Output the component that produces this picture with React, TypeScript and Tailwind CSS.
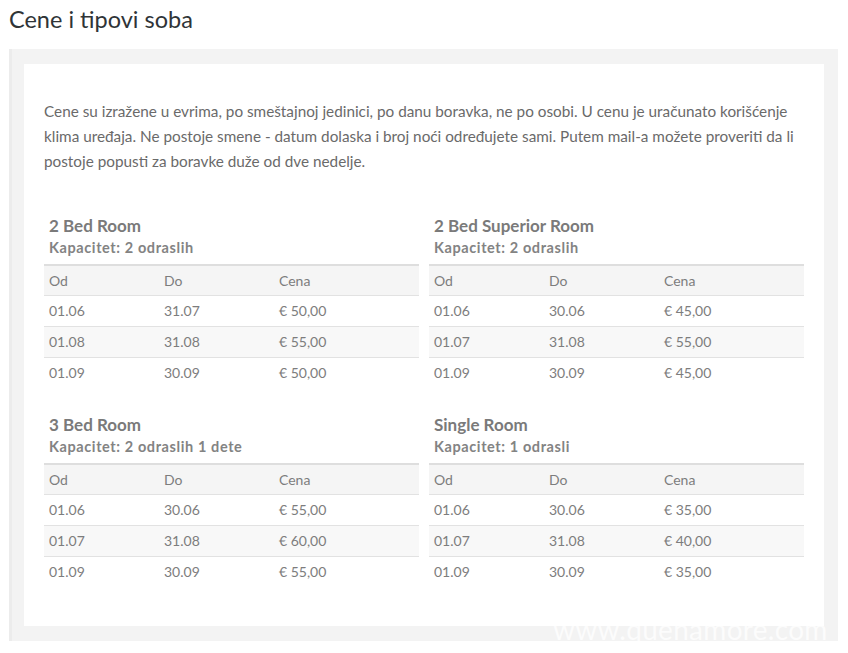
import React from "react";

type Row = [string, string, string];
type Room = { name: string; cap: string; rows: Row[] };

const rooms: Room[] = [
  { name: "2 Bed Room", cap: "Kapacitet: 2 odraslih", rows: [["01.06", "31.07", "€ 50,00"], ["01.08", "31.08", "€ 55,00"], ["01.09", "30.09", "€ 50,00"]] },
  { name: "2 Bed Superior Room", cap: "Kapacitet: 2 odraslih", rows: [["01.06", "30.06", "€ 45,00"], ["01.07", "31.08", "€ 55,00"], ["01.09", "30.09", "€ 45,00"]] },
  { name: "3 Bed Room", cap: "Kapacitet: 2 odraslih 1 dete", rows: [["01.06", "30.06", "€ 55,00"], ["01.07", "31.08", "€ 60,00"], ["01.09", "30.09", "€ 55,00"]] },
  { name: "Single Room", cap: "Kapacitet: 1 odrasli", rows: [["01.06", "30.06", "€ 35,00"], ["01.07", "31.08", "€ 40,00"], ["01.09", "30.09", "€ 35,00"]] },
];

function RoomTable({ room }: { room: Room }) {
  return (
    <div className="w-[375px]">
      <div className="px-[5px]">
        <div className="text-[17px] leading-[22px] font-bold text-[#7a7a7a]">{room.name}</div>
        <div className="text-[14.5px] leading-[18px] font-bold tracking-[0.6px] text-[#838383] mt-[2px]">{room.cap}</div>
      </div>
      <div className="mt-[7px] border-t-2 border-[#dedede] text-[14px] text-[#7d7d7d]">
        <div className="flex h-[29px] items-center bg-[#f5f5f5] px-[5px]">
          <div className="w-[115px]">Od</div>
          <div className="w-[115px]">Do</div>
          <div className="flex-1">Cena</div>
        </div>
        {room.rows.map((r, i) => (
          <div
            key={i}
            className={
              i === 1
                ? "flex h-[31px] items-center border-t border-[#e2e2e2] bg-[#f8f8f8] px-[5px] pb-[1px]"
                : "flex h-[31px] items-center border-t border-[#e2e2e2] bg-white px-[5px] pb-[1px]"
            }
          >
            <div className="w-[115px]">{r[0]}</div>
            <div className="w-[115px]">{r[1]}</div>
            <div className="flex-1">{r[2]}</div>
          </div>
        ))}
      </div>
    </div>
  );
}

export default function App() {
  return (
    <div className="relative w-[848px] h-[653px] bg-white overflow-hidden" style={{ fontFamily: "Lato, 'Open Sans', sans-serif" }}>
      <h2 className="pl-[9px] pt-[4px] text-[23.5px] leading-[30px] text-[#2f3437]">Cene i tipovi soba</h2>
      <div className="ml-[9px] mt-[15px] w-[829px] h-[592px] bg-[#f3f3f3] border-l-[3px] border-[#ececec] pl-[12px] pr-[14px] pt-[15px]">
        <div className="w-[800px] h-[562px] bg-white px-[20px] pt-[35px]">
          <p className="text-[15.3px] leading-[25px] text-[#6a6a6a]">
            Cene su izražene u evrima, po smeštajnoj jedinici, po danu boravka, ne po osobi. U cenu je uračunato korišćenje klima uređaja. Ne postoje smene - datum dolaska i broj noći određujete sami. Putem mail-a možete proveriti da li postoje popusti za boravke duže od dve nedelje.
          </p>
          <div className="mt-[41px] grid grid-cols-[375px_375px] gap-x-[10px] gap-y-[26px]">
            {rooms.map((r) => (
              <RoomTable key={r.name} room={r} />
            ))}
          </div>
        </div>
      </div>
      <div className="absolute left-[553px] top-[613px] text-[28px] leading-[32px] text-white opacity-75 tracking-[0.3px]">
        www.quenamore.com
      </div>
    </div>
  );
}
